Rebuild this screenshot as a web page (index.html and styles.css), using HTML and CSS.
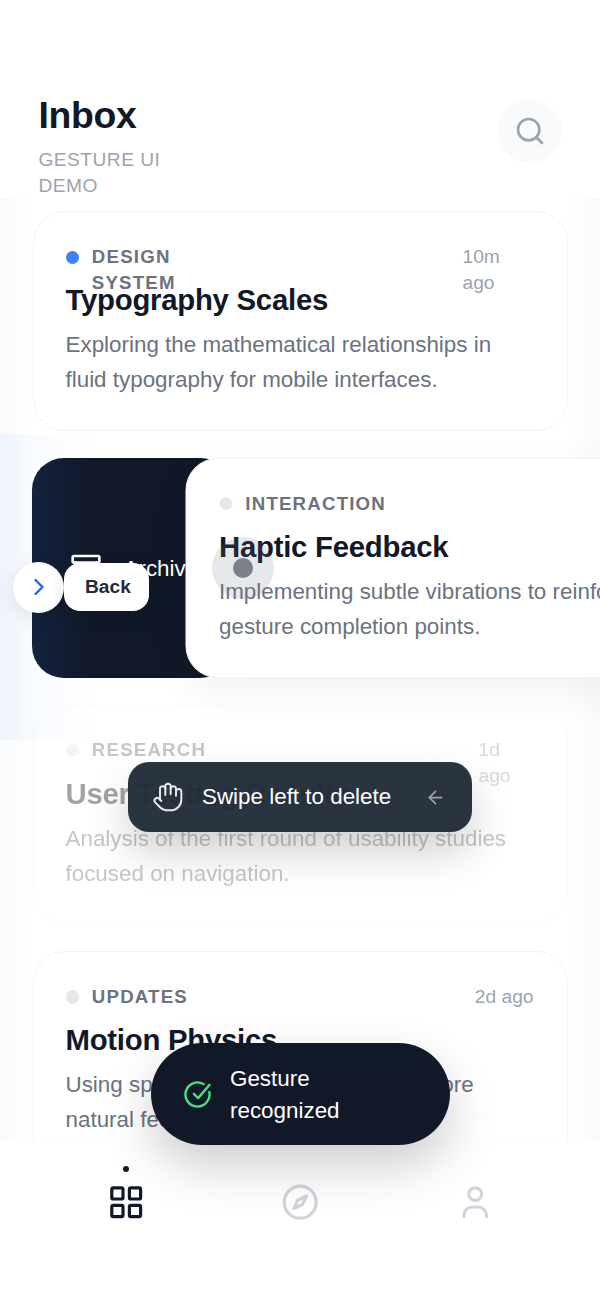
FILE: index.html
```html
<!DOCTYPE html>
<html lang="en">
<head>
  <meta charset="UTF-8">
  <meta name="viewport" content="width=device-width, initial-scale=1.0">
  <title>Inbox - Gesture UI Demo</title>
  <link rel="stylesheet" href="styles.css">
</head>
<body>
  <div class="phone">
    <header class="top">
      <div class="top-text">
        <h1>Inbox</h1>
        <p class="sub">GESTURE UI DEMO</p>
      </div>
      <button class="search" aria-label="Search">
        <svg class="icon-search" viewBox="0 0 24 24"><circle cx="11" cy="11" r="8"/><path d="M21 21l-4.3-4.3"/></svg>
      </button>
    </header>

    <main class="list">
      <article class="card">
        <div class="meta">
          <span class="dot dot-blue"></span>
          <span class="cat">DESIGN SYSTEM</span>
          <span class="time time-wide">10m ago</span>
        </div>
        <h2>Typography Scales</h2>
        <p class="desc">Exploring the mathematical relationships in fluid typography for mobile interfaces.</p>
      </article>

      <div class="swipe">
        <div class="swipe-action">
          <svg class="icon-archive" viewBox="0 0 24 24"><rect x="2" y="3" width="20" height="5" rx="1"/><path d="M4 8v11a2 2 0 0 0 2 2h12a2 2 0 0 0 2-2V8"/><path d="M10 12h4"/></svg>
          <span class="action-label">Archive</span>
        </div>
        <article class="card card-moved">
          <div class="meta">
            <span class="dot"></span>
            <span class="cat">INTERACTION</span>
          </div>
          <h2>Haptic Feedback</h2>
          <p class="desc">Implementing subtle vibrations to reinforce gesture completion points.</p>
        </article>
        <div class="touch"><span></span></div>
      </div>

      <article class="card card-faded">
        <div class="meta">
          <span class="dot"></span>
          <span class="cat">RESEARCH</span>
          <span class="time time-slim">1d ago</span>
        </div>
        <h2>User Testing Results</h2>
        <p class="desc">Analysis of the first round of usability studies focused on navigation.</p>
      </article>

      <article class="card">
        <div class="meta">
          <span class="dot"></span>
          <span class="cat">UPDATES</span>
          <span class="time">2d ago</span>
        </div>
        <h2>Motion Physics</h2>
        <p class="desc">Using spring animations to create a more natural feel.</p>
      </article>
    </main>

    <div class="edge">
      <span class="edge-arrow">
        <svg viewBox="0 0 24 24"><path d="M9 6l6 6-6 6"/></svg>
      </span>
      <button class="back">Back</button>
    </div>

    <div class="hint">
      <svg class="icon-hand" viewBox="0 0 24 24"><path d="M18 11V6a2 2 0 0 0-4 0"/><path d="M14 10V4a2 2 0 0 0-4 0v2"/><path d="M10 10.5V6a2 2 0 0 0-4 0v8"/><path d="M18 8a2 2 0 1 1 4 0v6a8 8 0 0 1-8 8h-2c-2.8 0-4.5-.86-5.99-2.34l-3.6-3.6a2 2 0 0 1 2.83-2.82L7 15"/></svg>
      <span class="hint-text">Swipe left to delete</span>
      <svg class="icon-left" viewBox="0 0 24 24"><path d="M19 12H5"/><path d="M12 19l-7-7 7-7"/></svg>
    </div>

    <div class="toast">
      <svg class="icon-check" viewBox="0 0 24 24"><path d="M21.8 10A10 10 0 1 1 17 3.34"/><path d="M9 11.5l3.5 3.5L22 4"/></svg>
      <span class="toast-text">Gesture recognized</span>
    </div>

    <nav class="tabs">
      <a class="tab tab-on">
        <svg viewBox="0 0 24 24"><rect x="3" y="3" width="7" height="7" rx="1"/><rect x="14" y="3" width="7" height="7" rx="1"/><rect x="14" y="14" width="7" height="7" rx="1"/><rect x="3" y="14" width="7" height="7" rx="1"/></svg>
      </a>
      <a class="tab">
        <svg viewBox="0 0 24 24"><circle cx="12" cy="12" r="10"/><path d="M16 8l-2.6 5.4L8 16l2.6-5.4z"/></svg>
      </a>
      <a class="tab">
        <svg viewBox="0 0 24 24"><circle cx="12" cy="7" r="4"/><path d="M5 21v-1a5 5 0 0 1 5-5h4a5 5 0 0 1 5 5v1"/></svg>
      </a>
    </nav>
  </div>
</body>
</html>
```

FILE: styles.css
```css
* { box-sizing: border-box; }
body { margin: 0; background: #fff; font-family: "Liberation Sans", Arial, sans-serif; color: #111827; }
h1, h2, p { margin: 0; }
button { font-family: inherit; border: none; cursor: pointer; }
svg { display: block; fill: none; stroke: currentColor; stroke-width: 2; stroke-linecap: round; stroke-linejoin: round; }

.phone { position: relative; width: 600px; height: 1299px; overflow: hidden; display: flex; flex-direction: column; background: #fff; }

/* header */
.top { height: 198px; padding: 93px 38px 0 38.5px; display: flex; justify-content: space-between; align-items: flex-start; flex-shrink: 0; }
.top-text { width: 160px; }
h1 { font-size: 37.33px; line-height: 44px; font-weight: 700; letter-spacing: -0.35px; }
.sub { margin-top: 10px; font-size: 19.2px; line-height: 26px; letter-spacing: 0.45px; color: #9ca3af; }
.search { width: 64px; height: 64px; margin-top: 6px; border-radius: 50%; background: #f9fafb; color: #9ca3af; display: flex; align-items: center; justify-content: center; padding: 0; }
.icon-search { width: 32px; height: 32px; }

/* list */
.list { position: relative; flex: 1; min-height: 0; overflow: hidden; padding: 13px 32.5px 0; display: flex; flex-direction: column; gap: 26.67px; }
.list::before, .list::after { content: ""; position: absolute; top: 0; bottom: 0; width: 32px; z-index: 0; }
.list::before { left: 0; background: linear-gradient(to right, #f8fafc, #fff); }
.list::after { right: 0; background: linear-gradient(to left, #f8fafc, #fff); }

.card { position: relative; z-index: 1; flex-shrink: 0; height: 220px; padding: 32px; background: #fff; border: 1.33px solid #f3f4f6; border-radius: 32px; }
.card-faded { opacity: 0.4; filter: grayscale(1); }
.card-moved { padding-left: 32.5px; transform: translateX(153.5px); box-shadow: 0 13px 40px rgba(0, 0, 0, 0.06); }

.meta { display: flex; align-items: flex-start; height: 26.67px; margin-bottom: 11.67px; }
.dot { width: 13.33px; height: 13.33px; margin: 6.5px 13px 0 0; border-radius: 50%; background: #e5e7eb; flex-shrink: 0; }
.dot-blue { background: #3b82f6; }
.cat { width: 130px; flex: none; font-size: 18.67px; line-height: 26px; font-weight: 700; letter-spacing: 1.2px; color: #6b7280; }
.time { margin-left: auto; margin-right: 1px; font-size: 19.2px; line-height: 26px; color: #9ca3af; white-space: nowrap; }
.time-wide { width: 71px; white-space: normal; }
.time-slim { width: 55px; white-space: normal; }
h2 { font-size: 29.33px; line-height: 36px; font-weight: 700; letter-spacing: -0.25px; margin-bottom: 9px; }
.desc { font-size: 22.4px; line-height: 35px; color: #6b7280; }

/* swiped row */
.swipe { position: relative; flex-shrink: 0; height: 220px; margin-left: -0.5px; z-index: 1; }
.swipe-action { position: absolute; top: 0; left: 0; bottom: 0; width: 200px; padding-left: 37.5px; display: flex; align-items: center; gap: 22px; font-size: 22.4px; color: #fff; border-radius: 32px; background: linear-gradient(to right, #111f38, #111827 32%); }
.action-label { padding-top: 2px; }
.icon-archive { width: 32px; height: 32px; flex-shrink: 0; }
.touch { position: absolute; left: 180px; top: 79px; width: 62px; height: 62px; border-radius: 50%; background: rgba(107, 114, 128, 0.16); display: flex; align-items: center; justify-content: center; z-index: 2; }
.touch span { width: 20px; height: 20px; border-radius: 50%; background: rgba(75, 85, 99, 0.7); }

/* left edge back gesture */
.edge { position: absolute; left: 0; top: 434px; width: 96px; height: 306px; z-index: 3; display: flex; align-items: center; padding-left: 13px; background: linear-gradient(to right, rgba(59, 130, 246, 0.05), rgba(59, 130, 246, 0)); }
.edge-arrow { width: 51px; height: 51px; flex-shrink: 0; border-radius: 50%; background: #fff; color: #2563eb; display: flex; align-items: center; justify-content: center; box-shadow: 0 5px 20px rgba(0, 0, 0, 0.1); }
.edge-arrow svg { width: 28px; height: 28px; }
.back { flex-shrink: 0; height: 48px; padding: 0 18px 0 21px; border-radius: 16px; background: #fff; color: #1f2937; font-size: 19.2px; font-weight: 700; box-shadow: 0 5px 20px rgba(0, 0, 0, 0.1); }

/* hint */
.hint { position: absolute; left: 128px; top: 762px; width: 344px; height: 70px; z-index: 4; display: flex; align-items: center; padding: 0 27px 0 24px; border-radius: 21px; background: rgba(31, 41, 55, 0.95); color: #fff; box-shadow: 0 21px 40px rgba(0, 0, 0, 0.18); }
.icon-hand { width: 32px; height: 32px; color: #e5e7eb; stroke-width: 1.5; flex-shrink: 0; }
.hint-text { margin-left: 18px; font-size: 22.4px; white-space: nowrap; }
.icon-left { width: 21px; height: 21px; margin-left: auto; margin-right: -1px; color: #9ca3af; }

/* toast */
.toast { position: absolute; left: 151px; top: 1043px; width: 299px; height: 102px; z-index: 5; display: flex; align-items: center; padding: 0 32px; border-radius: 51px; background: #111827; color: #fff; box-shadow: 0 21px 50px rgba(0, 0, 0, 0.2); }
.icon-check { width: 29px; height: 29px; color: #4ade80; flex-shrink: 0; }
.toast-text { margin-left: 18px; padding-top: 2px; width: 130px; font-size: 22.4px; line-height: 32px; }

/* nav */
.tabs { flex-shrink: 0; height: 159px; padding: 42px 105.8px 0 107px; display: flex; justify-content: space-between; align-items: flex-start; background: #fff; border-top: 1.33px solid #f9fafb; }
.tab { position: relative; color: #d1d5db; }
.tab svg { width: 38.4px; height: 38.4px; }
.tab-on { color: #111827; }
.tab-on::before { content: ""; position: absolute; left: 50%; top: -17px; width: 6px; height: 6px; margin-left: -3px; border-radius: 50%; background: #111827; }
```
